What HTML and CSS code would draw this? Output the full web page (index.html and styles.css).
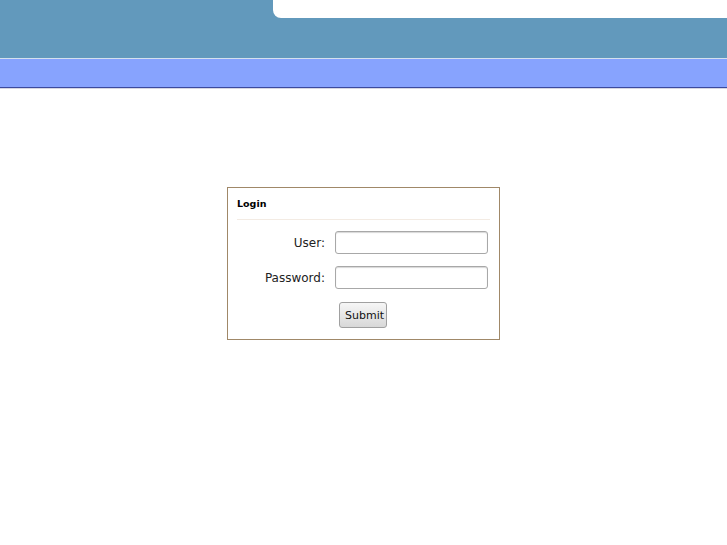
FILE: index.html
```html
<!DOCTYPE html>
<html lang="en">
<head>
    <meta charset="UTF-8">
    <title>Login</title>
    <link rel="stylesheet" href="styles.css">
</head>
<body>

    <div class="header">
        <div class="header-top">
            <div class="header-tab"></div>
        </div>
        <div class="header-bar"></div>
    </div>

    <div class="login-box">
        <h2>Login</h2>

        <form action="#" method="post">
            <div class="row">
                <label for="user">User:</label>
                <input type="text" id="user" name="user">
            </div>

            <div class="row">
                <label for="password">Password:</label>
                <input type="password" id="password" name="password">
            </div>

            <div class="row submit-row">
                <input type="submit" value="Submit">
            </div>
        </form>
    </div>

</body>
</html>
```

FILE: styles.css
```css
body {
    margin: 0;
    font-family: "DejaVu Sans", sans-serif;
    background: #ffffff;
}

.header-top {
    height: 58px;
    background-color: #6299bc;
    display: flex;
    justify-content: flex-end;
}

.header-tab {
    width: 454px;
    height: 18px;
    background-color: #ffffff;
    border-bottom-left-radius: 8px;
}

.header-bar {
    height: 28px;
    background-color: #87a3fe;
    border-top: 1px solid #d4e0ee;
    border-bottom: 1px solid #3b4a9e;
    box-shadow: 0 1px 0 #d6d6e2;
}

.login-box {
    width: 271px;
    margin: 99px 0 0 227px;
    border: 1px solid #a08868;
    box-sizing: content-box;
    padding: 0 0 11px 0;
}

.login-box h2 {
    margin: 0 9px 0 9px;
    padding: 10px 0 10px 0;
    font-size: 9.5px;
    font-weight: bold;
    border-bottom: 1px solid #f3ebe3;
}

form {
    margin: 0;
    padding-top: 11px;
}

.row {
    display: flex;
    align-items: center;
    margin-bottom: 12px;
}

.row label {
    width: 97px;
    text-align: right;
    font-size: 12px;
    color: #222222;
    margin-right: 10px;
}

.row input[type="text"],
.row input[type="password"] {
    width: 153px;
    height: 23px;
    box-sizing: border-box;
    border: 1px solid #a8a8a8;
    border-radius: 3px;
    box-shadow: inset 0 1px 1px #d8d8d8;
    padding: 2px 4px;
}

.submit-row {
    padding-left: 111px;
    margin: 13px 0 0 0;
}

input[type="submit"] {
    font-family: "DejaVu Sans", sans-serif;
    font-size: 11px;
    padding: 0 5px;
    height: 26px;
    width: 48px;
    color: #111111;
    background: linear-gradient(#f6f6f6, #d8d8d8);
    border: 1px solid #a0a0a0;
    border-radius: 3px;
}
```
